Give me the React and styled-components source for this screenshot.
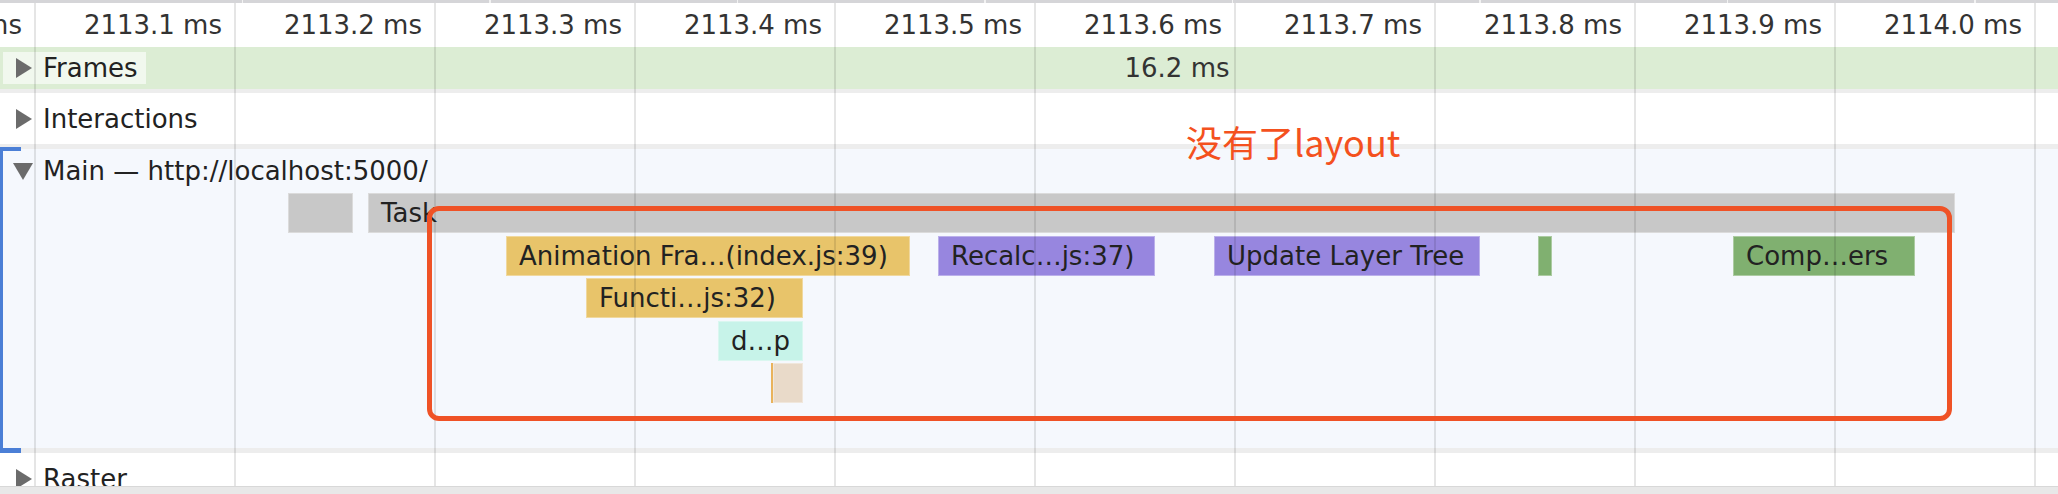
import React from "react";
import styled, { createGlobalStyle } from "styled-components";

const GlobalStyle = createGlobalStyle`
  html, body {
    margin: 0;
    padding: 0;
    background: #ffffff;
    overflow: hidden;
  }
`;

const ticks = [
  "2113.0", "2113.1", "2113.2", "2113.3", "2113.4", "2113.5",
  "2113.6", "2113.7", "2113.8", "2113.9", "2114.0", "2114.1",
];

// x positions in px (start, end) and stack level, read off the flame chart
const bars = [
  { level: 0, start: 288, end: 353, kind: "task" },
  { level: 0, start: 368, end: 1955, kind: "task", label: "Task" },
  { level: 1, start: 506, end: 910, kind: "script", label: "Animation Fra…(index.js:39)" },
  { level: 1, start: 938, end: 1155, kind: "render", label: "Recalc…js:37)" },
  { level: 1, start: 1214, end: 1480, kind: "render", label: "Update Layer Tree" },
  { level: 1, start: 1538, end: 1552, kind: "paint" },
  { level: 1, start: 1733, end: 1915, kind: "paint", label: "Comp…ers" },
  { level: 2, start: 586, end: 803, kind: "script", label: "Functi…js:32)" },
  { level: 3, start: 718, end: 803, kind: "native", label: "d…p" },
  { level: 4, start: 771, end: 803, kind: "gc" },
];

const barColors = {
  task: "#c8c8c8",
  script: "#e8c46a",
  render: "#9786df",
  paint: "#80b070",
  native: "#c7f3e9",
  gc: "#e9dac9",
};

const LEVEL_PITCH = 42.5;

const Panel = styled.div`
  position: relative;
  width: 2058px;
  height: 494px;
  overflow: hidden;
  display: flex;
  flex-direction: column;
  font-family: "DejaVu Sans", "Liberation Sans", sans-serif;
  color: #222;
  background: #fff;
`;

const TopStrip = styled.div`
  height: 3px;
  flex-shrink: 0;
  background-image: repeating-linear-gradient(
    to right,
    #d5d5d8 0,
    #d5d5d8 246px,
    #f2f2f2 246px,
    #f2f2f2 247.5px
  );
  background-position: -4px 0;
`;

const Body = styled.div`
  flex: 1;
  min-height: 0;
  overflow: hidden;
  display: flex;
  flex-direction: column;
`;

const Ruler = styled.div`
  height: 44px;
  flex-shrink: 0;
  display: flex;
  margin-left: -165px;
`;

const Tick = styled.div`
  width: 200px;
  flex-shrink: 0;
  box-sizing: border-box;
  padding-right: 13px;
  display: flex;
  align-items: center;
  justify-content: flex-end;
  font-size: 26px;
  color: #333;
  white-space: nowrap;
`;

const Track = styled.div`
  position: relative;
  flex-shrink: 0;
  height: ${(p) => p.$height}px;
  background: ${(p) => p.$bg || "#fff"};
  border-bottom: ${(p) => p.$sep || 0}px solid #ededed;
  display: flex;
  flex-direction: column;
`;

const Header = styled.div`
  height: ${(p) => p.$height}px;
  flex-shrink: 0;
  display: flex;
  align-items: center;
`;

const HeaderLabel = styled.div`
  position: relative;
  z-index: 2;
  display: flex;
  align-items: center;
  gap: 10px;
  height: 32px;
  margin-left: 3px;
  padding: 0 8px 0 10px;
  background: ${(p) => (p.$boxed ? "rgba(255,255,255,0.6)" : "transparent")};
  font-size: 26px;
  color: #222;
  white-space: nowrap;
`;

const Arrow = styled.svg`
  width: 20px;
  height: 20px;
  flex-shrink: 0;
  fill: #6b6b6b;
`;

const FramesBar = styled.div`
  position: absolute;
  inset: 0;
  padding-left: 296px;
  display: flex;
  align-items: center;
  justify-content: center;
  font-size: 26px;
  color: #333;
`;

const Bracket = styled.span`
  position: absolute;
  left: 0;
  top: -2px;
  bottom: -5px;
  width: 21px;
  box-sizing: border-box;
  border-left: 3px solid #4b7fd6;
  border-top: 4px solid #4b7fd6;
  border-bottom: 5px solid #4b7fd6;
  z-index: 3;
`;

const FlameChart = styled.div`
  position: relative;
  flex: 1;
`;

const Bar = styled.div`
  position: absolute;
  height: 40px;
  box-sizing: border-box;
  padding-left: 13px;
  background: ${(p) => barColors[p.$kind]};
  box-shadow: inset 0 0 0 1px rgba(255, 255, 255, 0.35);
  border-left: ${(p) => (p.$kind === "gc" ? "2px solid #e9b35c" : "none")};
  font-size: 26px;
  line-height: 40px;
  color: #222;
  white-space: nowrap;
  overflow: hidden;
`;

const GridOverlay = styled.div`
  position: absolute;
  left: 0;
  right: 0;
  top: 3px;
  bottom: 8px;
  pointer-events: none;
  z-index: 4;
  background-image: repeating-linear-gradient(
    to right,
    transparent 0,
    transparent 34px,
    rgba(0, 0, 0, 0.1) 34px,
    rgba(0, 0, 0, 0.1) 36px,
    transparent 36px,
    transparent 200px
  );
`;

const Highlight = styled.div`
  position: absolute;
  left: 427px;
  top: 206px;
  width: 1525px;
  height: 215px;
  box-sizing: border-box;
  border: 5px solid #ef5226;
  border-radius: 12px;
  z-index: 5;
  pointer-events: none;
`;

const Note = styled.div`
  position: absolute;
  left: 1186px;
  top: 121px;
  z-index: 5;
  font-family: "Noto Sans CJK SC", "Noto Sans", sans-serif;
  font-size: 36px;
  line-height: 40px;
  color: #f4511e;
  white-space: nowrap;
`;

const Scrollbar = styled.div`
  height: 8px;
  flex-shrink: 0;
  background: #e8e8e8;
  border-top: 1px solid #d8d8d8;
  box-sizing: border-box;
`;

const TriangleRight = () => (
  <Arrow viewBox="0 0 20 20">
    <polygon points="3,0 19,10 3,20" />
  </Arrow>
);

const TriangleDown = () => (
  <Arrow viewBox="0 0 20 20">
    <polygon points="0,2 20,2 10,19" />
  </Arrow>
);

export default function App() {
  return (
    <>
      <GlobalStyle />
      <Panel>
        <TopStrip />
        <Body>
          <Ruler>
            {ticks.map((t) => (
              <Tick key={t}>{t} ms</Tick>
            ))}
          </Ruler>

          <Track $height={42} $bg="#dcedd4" $sep={4}>
            <FramesBar>16.2 ms</FramesBar>
            <Header $height={42}>
              <HeaderLabel $boxed>
                <TriangleRight />
                Frames
              </HeaderLabel>
            </Header>
          </Track>

          <Track $height={51} $sep={5}>
            <Header $height={51}>
              <HeaderLabel>
                <TriangleRight />
                Interactions
              </HeaderLabel>
            </Header>
          </Track>

          <Track $height={299} $bg="#f5f8fd" $sep={5}>
            <Bracket />
            <Header $height={44}>
              <HeaderLabel>
                <TriangleDown />
                Main — http://localhost:5000/
              </HeaderLabel>
            </Header>
            <FlameChart>
              {bars.map((b, i) => (
                <Bar
                  key={i}
                  $kind={b.kind}
                  style={{
                    left: b.start,
                    width: b.end - b.start,
                    top: b.level * LEVEL_PITCH,
                  }}
                >
                  {b.label}
                </Bar>
              ))}
            </FlameChart>
          </Track>

          <Track $height={51}>
            <Header $height={51}>
              <HeaderLabel>
                <TriangleRight />
                Raster
              </HeaderLabel>
            </Header>
          </Track>
        </Body>
        <Scrollbar />
        <GridOverlay />
        <Note>没有了layout</Note>
        <Highlight />
      </Panel>
    </>
  );
}
